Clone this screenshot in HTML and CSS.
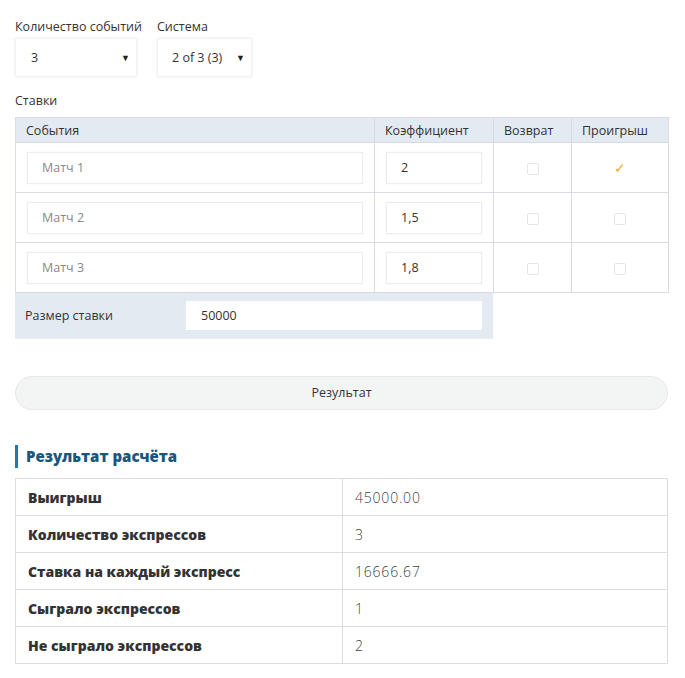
FILE: index.html
```html
<!DOCTYPE html>
<html lang="ru">
<head>
<meta charset="utf-8">
<title>Калькулятор системы</title>
<link rel="stylesheet" href="styles.css">
</head>
<body>
<div class="page">
  <div class="top">
    <div class="field field-count">
      <div class="field-label">Количество событий</div>
      <div class="select select-count"><span>3</span><span class="arrow">▼</span></div>
    </div>
    <div class="field field-system">
      <div class="field-label">Система</div>
      <div class="select select-system"><span>2 of 3 (3)</span><span class="arrow">▼</span></div>
    </div>
  </div>

  <div class="section-label">Ставки</div>

  <table class="bets">
    <colgroup>
      <col class="c-event"><col class="c-coef"><col class="c-ret"><col class="c-lose">
    </colgroup>
    <thead>
      <tr><th>События</th><th>Коэффициент</th><th>Возврат</th><th>Проигрыш</th></tr>
    </thead>
    <tbody>
      <tr>
        <td><div class="inp placeholder">Матч 1</div></td>
        <td><div class="inp">2</div></td>
        <td class="cb-cell"><span class="cb"></span></td>
        <td class="cb-cell"><span class="check">✓</span></td>
      </tr>
      <tr>
        <td><div class="inp placeholder">Матч 2</div></td>
        <td><div class="inp">1,5</div></td>
        <td class="cb-cell"><span class="cb"></span></td>
        <td class="cb-cell"><span class="cb"></span></td>
      </tr>
      <tr>
        <td><div class="inp placeholder">Матч 3</div></td>
        <td><div class="inp">1,8</div></td>
        <td class="cb-cell"><span class="cb"></span></td>
        <td class="cb-cell"><span class="cb"></span></td>
      </tr>
    </tbody>
  </table>

  <div class="stake">
    <div class="stake-label">Размер ставки</div>
    <div class="stake-input">50000</div>
  </div>

  <div class="result-btn">Результат</div>

  <h2 class="result-title">Результат расчёта</h2>

  <table class="results">
    <tr><th>Выигрыш</th><td>45000.00</td></tr>
    <tr><th>Количество экспрессов</th><td>3</td></tr>
    <tr><th>Ставка на каждый экспресс</th><td>16666.67</td></tr>
    <tr><th>Сыграло экспрессов</th><td>1</td></tr>
    <tr><th>Не сыграло экспрессов</th><td>2</td></tr>
  </table>
</div>
</body>
</html>
```

FILE: styles.css
```css
* { box-sizing: border-box; }
html, body { margin: 0; padding: 0; background: #fff; }
body {
  font-family: "Open Sans", "Noto Sans", sans-serif;
  font-size: 12.5px;
  color: #333;
}
.page { width: 653px; margin-left: 15px; padding-top: 18px; }

.top { display: flex; gap: 20px; }
.field-count { width: 122px; }
.field-system { width: 95px; }
.field-label { line-height: 18px; height: 18px; margin-bottom: 2px; color: #333; white-space: nowrap; }
.select {
  display: flex; align-items: center; justify-content: space-between;
  height: 39px;
  border: 1px solid #f1f1f1;
  box-shadow: 0 0 3px rgba(0,0,0,0.08);
  background: #fff;
  border-radius: 2px;
}
.select-count { width: 122px; padding: 0 6px 0 15px; }
.select-system { width: 95px; padding: 0 6px 0 14px; }
.arrow { font-size: 9px; color: #222; }

.section-label { margin-top: 15px; line-height: 18px; height: 18px; margin-bottom: 7px; }

.bets { border-collapse: collapse; width: 653px; table-layout: fixed; }
.c-event { width: 359px; }
.c-coef { width: 119px; }
.c-ret { width: 78px; }
.c-lose { width: 97px; }
.bets th {
  background: #e4eaf1;
  font-weight: normal;
  text-align: left;
  height: 25px;
  padding: 0 10px;
  border: 1px solid #d6dce2;
  color: #333;
}
.bets td {
  height: 50px;
  padding: 0 11px;
  border: 1px solid #d6dce2;
  vertical-align: middle;
}
.inp {
  height: 32px;
  line-height: 30px;
  border: 1px solid #ededed;
  box-shadow: 0 0 2px rgba(0,0,0,0.05);
  padding-left: 14px;
  color: #333;
  background: #fff;
}
.inp.placeholder { color: #888; }
.cb-cell { text-align: center; }
.cb {
  display: inline-block; width: 12px; height: 12px;
  border: 1px solid #e6e6e6; border-radius: 2px;
  vertical-align: middle;
}
.check { color: #f0a430; font-size: 14px; }

.stake {
  width: 478px; height: 46px;
  background: #e4eaf1;
  display: flex; align-items: center;
  padding: 0 11px 0 10px;
  border-bottom: 1px solid #e9edf1;
}
.stake-label { width: 161px; }
.stake-input {
  flex: 1; height: 29px; line-height: 29px;
  background: #fff; padding-left: 15px; color: #333;
}

.result-btn {
  margin-top: 37px;
  height: 34px; line-height: 32px;
  text-align: center;
  background: #f3f4f4;
  border: 1px solid #e7e8e8;
  border-radius: 17px;
  color: #333;
}

.result-title {
  margin: 35px 0 0;
  height: 23px; line-height: 23px;
  border-left: 3px solid #1a7ab8;
  padding-left: 8px;
  font-size: 15px;
  font-weight: 800;
  color: #1b577d;
}

.results { margin-top: 10px; border-collapse: collapse; width: 653px; table-layout: fixed; }
.results th, .results td {
  border: 1px solid #dcdcdc;
  height: 37px;
  padding: 0 12px;
  text-align: left;
}
.results th { width: 327px; font-size: 14px; font-weight: 800; color: #333; }
.results td { color: #444; font-size: 14px; font-weight: 300; letter-spacing: 0.8px; }
```
